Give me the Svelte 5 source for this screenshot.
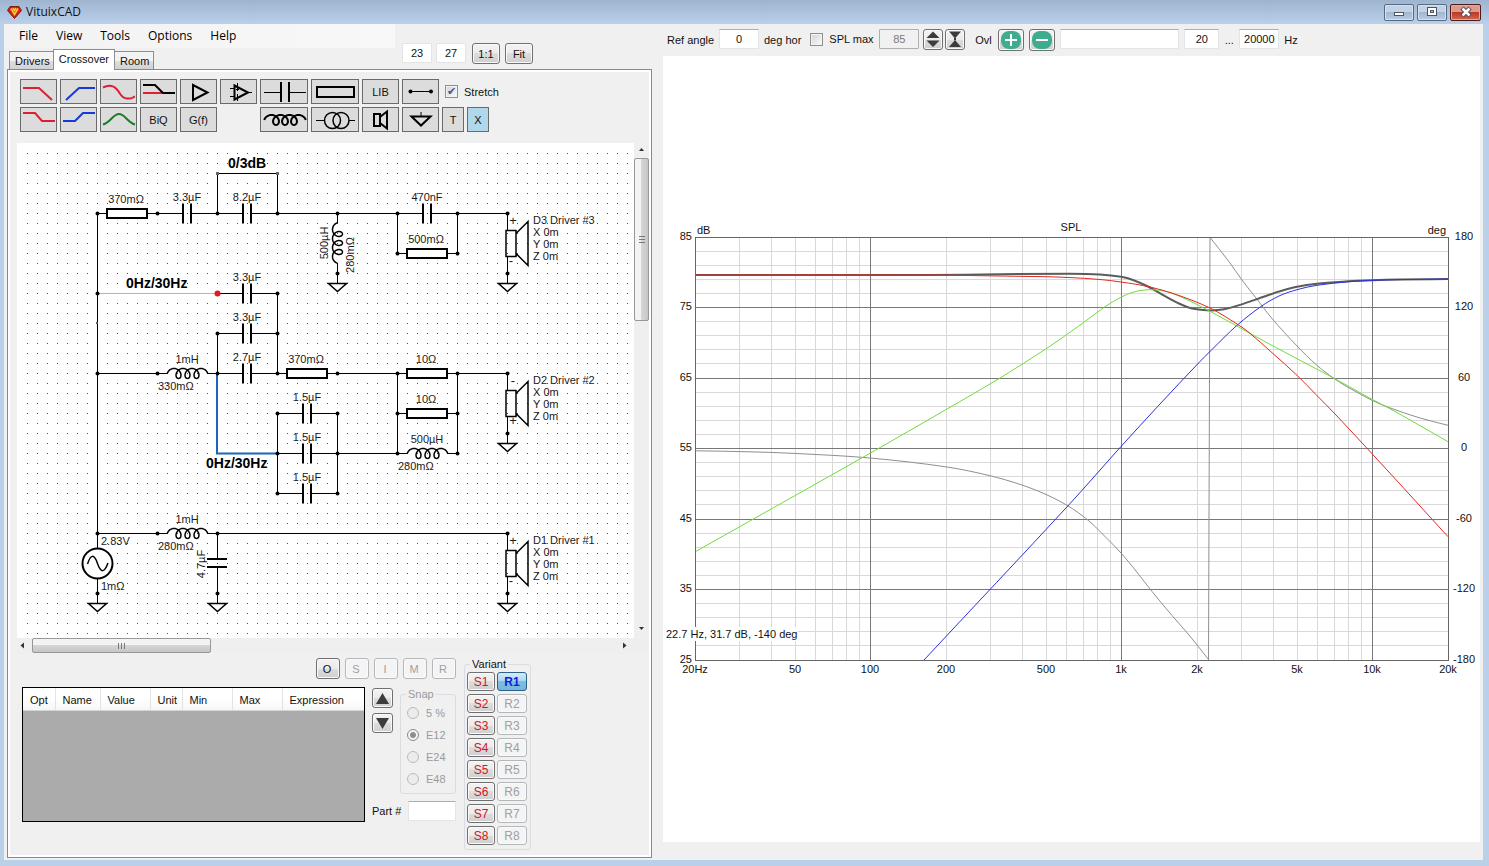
<script>
  const menus = ['File', 'View', 'Tools', 'Options', 'Help'];
  const tabs = ['Drivers', 'Crossover', 'Room'];
  const columns = [
    { name: 'Opt', w: 32 },
    { name: 'Name', w: 45 },
    { name: 'Value', w: 50 },
    { name: 'Unit', w: 32 },
    { name: 'Min', w: 50 },
    { name: 'Max', w: 50 },
    { name: 'Expression', w: 82 }
  ];
  const snaps = ['5 %', 'E12', 'E24', 'E48'];
  const slots = [1, 2, 3, 4, 5, 6, 7, 8];
  const editTools = ['O', 'S', 'I', 'M', 'R'];

  // Coil outline: a trochoid whose loops hang below the wire.
  function coil(loops, pitch, ax, ay) {
    const end = Math.PI * (loops + 0.5);
    const pts = [];
    for (let t = -end; t <= end + 0.001; t += Math.PI / 16) {
      const x = (pitch * t) / (2 * Math.PI) - ax * Math.sin(t);
      const y = ay * Math.cos(t);
      pts.push(`${x.toFixed(2)} ${y.toFixed(2)}`);
    }
    return 'M' + pts.join('L');
  }
  const coilPath = coil(3, 9, 4.5, 5);
  const toolCoil = coil(3, 9, 5, 5);

  // Schematic, in canvas units
  const wires = [
    'M97.5 533.5V213.5H107', 'M147 213.5H183', 'M191 213.5H243', 'M251 213.5H423', 'M431 213.5H507.5',
    'M217.5 213.5V173.5H277.5V213.5', 'M397.5 213.5V253.5H407', 'M447 253.5H457.5V213.5',
    'M217.5 293.5H243', 'M251 293.5H277.5V373.5', 'M243 333.5H217.5V373.5', 'M251 333.5H277.5',
    'M97.5 373.5H167', 'M207 373.5H243', 'M251 373.5H287', 'M327 373.5H407', 'M447 373.5H507.5',
    'M303 413.5H277.5V493.5H303', 'M311 413.5H337.5V493.5H311', 'M277.5 453.5H303', 'M311 453.5H407',
    'M397.5 373.5V453.5', 'M457.5 373.5V453.5', 'M397.5 413.5H407', 'M447 413.5H457.5', 'M447 453.5H457.5',
    'M97.5 533.5H167', 'M207 533.5H507.5', 'M217.5 533.5V559', 'M217.5 567V603.5',
    'M97.5 533.5V548', 'M97.5 579V603.5', 'M337.5 213.5V223', 'M337.5 263V283.5'
  ];
  const nodes = [
    [97.5, 213.5], [157.5, 213.5], [217.5, 213.5], [277.5, 213.5], [337.5, 213.5], [397.5, 213.5], [457.5, 213.5], [507.5, 213.5],
    [397.5, 253.5], [457.5, 253.5], [337.5, 273.5], [507.5, 273.5], [97.5, 293.5], [277.5, 293.5], [217.5, 333.5], [277.5, 333.5],
    [97.5, 373.5], [157.5, 373.5], [217.5, 373.5], [277.5, 373.5], [337.5, 373.5], [397.5, 373.5], [457.5, 373.5], [507.5, 373.5],
    [277.5, 413.5], [337.5, 413.5], [397.5, 413.5], [457.5, 413.5], [277.5, 453.5], [337.5, 453.5], [397.5, 453.5], [457.5, 453.5],
    [277.5, 493.5], [337.5, 493.5], [507.5, 433.5], [97.5, 533.5], [157.5, 533.5], [217.5, 533.5], [507.5, 533.5],
    [97.5, 593.5], [217.5, 593.5], [507.5, 593.5]
  ];
  const caps = [
    [187, 213.5, '3.3µF'], [247, 213.5, '8.2µF'], [427, 213.5, '470nF'], [247, 293.5, '3.3µF'], [247, 333.5, '3.3µF'],
    [247, 373.5, '2.7µF'], [307, 413.5, '1.5µF'], [307, 453.5, '1.5µF'], [307, 493.5, '1.5µF']
  ];
  const resistors = [
    [127, 213, '370mΩ'], [427, 253, '500mΩ'], [307, 373, '370mΩ'], [427, 373, '10Ω'], [427, 413, '10Ω']
  ];
  const coils = [
    [187, 373.5, '1mH', '330mΩ'], [427, 453.5, '500µH', '280mΩ'], [187, 533.5, '1mH', '280mΩ']
  ];
  const grounds = [[337.5, 283.5], [507.5, 283.5], [507.5, 443.5], [97.5, 603.5], [217.5, 603.5], [507.5, 603.5]];
  const drivers = [
    { y: 213.5, name: 'D3 Driver #3', top: '+', bottom: '-' },
    { y: 373.5, name: 'D2 Driver #2', top: '-', bottom: '+' },
    { y: 533.5, name: 'D1 Driver #1', top: '+', bottom: '-' }
  ];

  // Response chart
  const left = 695.5, right = 1448.5, top = 237.5, bottom = 660.5;
  const fx = (f) => Math.round(left + 251 * Math.log10(f / 20) - 0.5) + 0.5;
  const dy = (db) => Math.floor(237 + (85 - db) * 7.05) + 0.5;
  const minorF = [];
  for (const d of [10, 100, 1000, 10000]) for (let k = 2; k < 10; k++) {
    const f = d * k;
    if (f > 20 && f < 20000) minorF.push(f);
  }
  const minorDb = [];
  for (let d = 27; d < 85; d += 2) if (d % 10 !== 5) minorDb.push(d);
  const majorDb = [75, 65, 55, 45, 35];
  const majorF = [100, 1000, 10000];
  const dbLabels = [85, 75, 65, 55, 45, 35, 25];
  const freqLabels = [[20, '20Hz'], [50, '50'], [100, '100'], [200, '200'], [500, '500'], [1000, '1k'], [2000, '2k'], [5000, '5k'], [10000, '10k'], [20000, '20k']];

  function smooth(p) {
    let d = `M${p[0][0]} ${p[0][1]}`;
    for (let i = 0; i < p.length - 1; i++) {
      const a = p[Math.max(0, i - 1)], b = p[i], c = p[i + 1], e = p[Math.min(p.length - 1, i + 2)];
      const h = c[0] - b[0];
      const m1 = (c[1] - a[1]) / (c[0] - a[0]);
      const m2 = (e[1] - b[1]) / (e[0] - b[0]);
      d += `C${(b[0] + h / 3).toFixed(1)} ${(b[1] + (m1 * h) / 3).toFixed(1)} ${(c[0] - h / 3).toFixed(1)} ${(c[1] - (m2 * h) / 3).toFixed(1)} ${c[0]} ${c[1]}`;
    }
    return d;
  }
  const total = smooth([[696, 275], [930, 275], [1000, 274.2], [1069, 273.7], [1100, 274.4], [1121, 276.7], [1133, 280], [1149, 287], [1165, 296.2], [1179, 303.5], [1192, 308.5], [1210, 310.4], [1224, 309.3], [1240, 304.9], [1262, 297.3], [1280, 291.3], [1297, 286.8], [1317, 283.7], [1348, 281.3], [1372, 280.2], [1400, 279.6], [1448, 279]]);
  const red = smooth([[696, 275], [930, 275], [1000, 276], [1045, 276.7], [1069, 277.5], [1100, 279.5], [1121, 282], [1150, 287], [1179, 295.5], [1211, 308.5], [1237, 324], [1249, 332.5], [1272, 352.7], [1297, 375.3], [1316, 394.6], [1336, 415], [1372, 453.7], [1399, 483], [1448, 536.7]]);
  const blue = smooth([[924, 660], [1069, 504.7], [1121, 446.5], [1160, 404], [1197.6, 364], [1211, 350.5], [1237, 325.3], [1261, 306.5], [1279, 296], [1297, 289.7], [1317, 285.3], [1348, 281.8], [1372, 280.4], [1400, 279.6], [1448, 279]]);
  const green = smooth([[696, 551.3], [870, 453.3], [947, 409], [1000, 378], [1045, 349.5], [1069, 333], [1089, 318.5], [1106, 306], [1121, 297.2], [1132, 292.5], [1142, 290.3], [1152, 289.7], [1166, 291.4], [1176, 294.7], [1192, 302], [1211, 311.8], [1236, 325.5], [1272, 345.5], [1297, 358.7], [1336, 379.3], [1372, 399.3], [1396, 412], [1448, 441.7]]);
  const phaseLow = smooth([[696, 450.8], [750, 451.8], [794, 453.4], [870, 458], [947, 467], [990, 475.7], [1021, 484.7], [1045, 494], [1069, 506.5], [1089, 521], [1102, 533.5], [1121, 553], [1136, 571], [1152, 591.5], [1172, 615.5], [1189, 635], [1208.5, 659.5]]);
  const phaseHigh = smooth([[1210.5, 238], [1229, 261.7], [1242, 280], [1256, 298], [1272, 318.5], [1297, 346], [1316, 364.5], [1334, 378.5], [1352, 389.5], [1372, 400.3], [1389, 407.5], [1419, 417.7], [1448, 425.3]]);

  let stretch = $state(true);
  let splMax = $state(false);
</script>

<div class="window">
  <header class="title">
    <svg width="15" height="13" viewBox="0 0 15 13" aria-hidden="true">
      <path d="M3 .5H12L14.5 4.5L7.5 12.5L.5 4.5Z" fill="#c81e18" stroke="#7d1f14" />
      <path d="M3.5 2H6L7.500 4L9 2H11.500L12.500 4.500L7.500 10.500L2.500 4.500Z" fill="#e02a1c" />
      <path d="M4 2.500L7.500 8.500L11 2.500M6 2L7.500 4.500L9 2" fill="none" stroke="#f6cf3a" stroke-width="1.500" />
    </svg>
    <h1>VituixCAD</h1>
    <div class="win-buttons">
      <button aria-label="Minimize"><svg width="12" height="12"><rect x="1.5" y="6.5" width="9" height="3" fill="#fff" stroke="#4b5563" /></svg></button>
      <button aria-label="Maximize"><svg width="12" height="12"><rect x="1.5" y="1.5" width="9" height="8" fill="#fff" stroke="#4b5563" /><rect x="4.5" y="4.5" width="3" height="2" fill="#a9bed6" stroke="#4b5563" /></svg></button>
      <button class="close" aria-label="Close"><svg width="14" height="12"><path d="M3 2L11 10M11 2L3 10" stroke="#53424a" stroke-width="4.5" /><path d="M3.500 2.500L10.500 9.500M10.500 2.500L3.500 9.500" stroke="#fff" stroke-width="2.500" /></svg></button>
    </div>
  </header>

  <main>
    <section class="left">
      <div class="head">
        <div class="head-left">
          <nav class="menu">
            {#each menus as m}<button>{m}</button>{/each}
          </nav>
          <div class="tabs" role="tablist">
            {#each tabs as t}<button role="tab" aria-selected={t === 'Crossover'} class:active={t === 'Crossover'}>{t}</button>{/each}
          </div>
        </div>
        <div class="zoom">
          <input class="num" aria-label="Columns" value="23" />
          <input class="num" aria-label="Rows" value="27" />
          <button class="btn">1:1</button>
          <button class="btn">Fit</button>
        </div>
      </div>

      <div class="page">
        <div class="tools">
          <button class="tool" aria-label="Low pass"><svg viewBox="0 0 35 23"><path d="M2 8H18L31 20" stroke="#dd2030" stroke-width="2" /></svg></button>
          <button class="tool" aria-label="High pass"><svg viewBox="0 0 35 23"><path d="M5 20L18 8H34" stroke="#1838d8" stroke-width="2" /></svg></button>
          <button class="tool" aria-label="Shelving"><svg viewBox="0 0 35 23"><path d="M2 7.500C7 5 12 5 16 9.500S20 18 26 18.500S31 17.500 34 16.500" stroke="#dd2030" stroke-width="2" /></svg></button>
          <button class="tool" aria-label="Allpass"><svg viewBox="0 0 35 23"><path d="M2 13H21" stroke="#e02030" stroke-width="2" /><path d="M2 5H14L22 13H34" stroke="#000" stroke-width="2" /></svg></button>
          <button class="tool" aria-label="Buffer"><svg viewBox="0 0 35 23"><path d="M12 5V20L26.500 12.500Z" stroke="#000" stroke-width="2" /></svg></button>
          <button class="tool" aria-label="Opamp"><svg viewBox="0 0 35 23"><path d="M13.500 5.500V19.500L27 12.500Z" stroke="#000" stroke-width="2" /><path d="M9 8.500H13M9 16.500H13M27 12.500H31M15 9.500H18M16.500 3V11M16.500 14V21" stroke="#000" /></svg></button>
          <button class="tool" aria-label="Capacitor"><svg viewBox="0 0 46 23"><path d="M3 12.500H20M28 12.500H45" stroke="#000" /><path d="M20 2V22M28 2V22" stroke="#000" stroke-width="2" /></svg></button>
          <button class="tool" aria-label="Resistor"><svg viewBox="0 0 46 23"><rect x="5" y="7" width="37" height="10" stroke="#000" stroke-width="2" /></svg></button>
          <button class="tool">LIB</button>
          <button class="tool" aria-label="Wire"><svg viewBox="0 0 35 23"><path d="M7 11.500H28" stroke="#000" /><circle cx="7.500" cy="11.500" r="2" fill="#000" /><circle cx="28" cy="11.500" r="2" fill="#000" /></svg></button>
          <label class="check stretch"><input type="checkbox" bind:checked={stretch} />Stretch</label>
          <button class="tool" aria-label="Shelf cut"><svg viewBox="0 0 35 23"><path d="M2 5H14L21 13H34" stroke="#dd2030" stroke-width="2" /></svg></button>
          <button class="tool" aria-label="Shelf boost"><svg viewBox="0 0 35 23"><path d="M2 13H14L22 5H34" stroke="#1838d8" stroke-width="2" /></svg></button>
          <button class="tool" aria-label="Peak"><svg viewBox="0 0 35 23"><path d="M2 16.500C10 14 12 6 18 6S26 14 34 16.500" stroke="#1d7c2a" stroke-width="2" /></svg></button>
          <button class="tool">BiQ</button>
          <button class="tool">G(f)</button>
          <button class="tool col7" aria-label="Inductor"><svg viewBox="0 0 46 23"><path d={toolCoil} transform="translate(24 12)" stroke="#000" stroke-width="2" /></svg></button>
          <button class="tool" aria-label="Transformer"><svg viewBox="0 0 46 23"><path d="M4 12.500H12M37 12.500H43" stroke="#000" /><circle cx="20.500" cy="12.500" r="8" stroke="#000" stroke-width="1.500" /><circle cx="29" cy="12.500" r="8" stroke="#000" stroke-width="1.500" /></svg></button>
          <button class="tool" aria-label="Driver"><svg viewBox="0 0 35 23"><path d="M11 6H17V18H11ZM17 9L24 3.500V20.500L17 15" stroke="#000" stroke-width="2" /></svg></button>
          <button class="tool" aria-label="Ground"><svg viewBox="0 0 35 23"><path d="M18 4V8" stroke="#000" /><path d="M8.500 8.500H27.500L18 17.500Z" stroke="#000" stroke-width="2" /></svg></button>
          <button class="tool">T</button>
          <button class="tool on">X</button>
        </div>

        <div class="canvas">
          <svg class="schematic" viewBox="17 143 617 495">
            <defs>
              <pattern id="grid" x="27" y="153" width="10" height="10" patternUnits="userSpaceOnUse">
                <rect width="1" height="1" fill="#4a4a4a" />
              </pattern>
            </defs>
            <rect x="17" y="143" width="617" height="495" fill="#fff" />
            <rect x="27" y="153" width="602" height="482" fill="url(#grid)" />
            <g fill="none" stroke="#000">
              <path d={wires.join('')} />
              <path d="M97.5 293.500H217.500" stroke="#b4b4b4" />
              {#each caps as c}
                <path d="M{c[0] - 4} {c[1] - 10}v20M{c[0] + 4} {c[1] - 10}v20" stroke-width="2" />
              {/each}
              <path d="M207 559H227M207 567H227" stroke-width="2" />
              {#each resistors as r}
                <rect x={r[0] - 20} y={r[1] - 4} width="40" height="9" stroke-width="2" fill="#fff" />
              {/each}
              {#each coils as c}
                <path d={coilPath} transform="translate({c[0] + 0.5} {c[1]})" stroke-width="1.500" />
              {/each}
              <path d={coilPath} transform="translate(337.5 243) rotate(-90)" stroke-width="1.500" />
              {#each grounds as g}
                <path d="M{g[0] - 9} {g[1]}h18l-9 8z" stroke-width="1.500" fill="#fff" />
              {/each}
              {#each drivers as d}
                <path d="M507.5 {d.y}v17M507.500 {d.y + 43}v27" />
                <path d="M506 {d.y + 17}h10v26h-10zM516 {d.y + 20}l12 -12v44l-12 -12" stroke-width="1.500" />
              {/each}
              <circle cx="97.500" cy="563.500" r="15" stroke-width="2" fill="#fff" />
              <path d="M87.500 564Q92.500 549 97.500 563.500T108 563" stroke-width="1.500" />
              <path d="M217 373.5V453.5H277.500" stroke="#1a66b8" stroke-width="2" />
            </g>
            {#each nodes as n}<circle cx={n[0]} cy={n[1]} r="2" />{/each}
            <rect x="96" y="322" width="2" height="2" fill="#555" />
            <rect x="216" y="172" width="3" height="3" fill="#666" />
            <rect x="276" y="172" width="3" height="3" fill="#666" />
            <circle cx="217.500" cy="293.500" r="3" fill="#e01b24" />
            <g class="vals">
              {#each caps as c}<text x={c[0]} y={c[1] - 12.5} text-anchor="middle">{c[2]}</text>{/each}
              {#each resistors as r}<text x={r[0] - 1} y={r[1] - 10} text-anchor="middle">{r[2]}</text>{/each}
              {#each coils as c}
                <text x={c[0]} y={c[1] - 10.5} text-anchor="middle">{c[2]}</text>
                <text x={c[0] - 29} y={c[1] + 16.5}>{c[3]}</text>
              {/each}
              <text transform="translate(328 243) rotate(-90)" text-anchor="middle">500µH</text>
              <text transform="translate(354 255) rotate(-90)" text-anchor="middle">280mΩ</text>
              <text transform="translate(205 564) rotate(-90)" text-anchor="middle">4.7µF</text>
              <text x="101" y="545">2.83V</text>
              <text x="101" y="590">1mΩ</text>
              {#each drivers as d}
                <text x="513" y={d.y + 11.5} text-anchor="middle" class="sign">{d.top}</text>
                <text x={d.bottom === '+' ? 513 : 511} y={d.y + 51.5} text-anchor="middle" class="sign">{d.bottom}</text>
                <text x="533" y={d.y + 10.5}>{d.name}</text>
                <text x="533" y={d.y + 22.5}>X 0m</text>
                <text x="533" y={d.y + 34.5}>Y 0m</text>
                <text x="533" y={d.y + 46.5}>Z 0m</text>
              {/each}
            </g>
            <g class="notes">
              <text x="228" y="168">0/3dB</text>
              <text x="126" y="288">0Hz/30Hz</text>
              <text x="206" y="468">0Hz/30Hz</text>
            </g>
          </svg>
          <div class="vbar">
            <svg width="15" height="15"><path d="M5 8H10L7.500 5Z" fill="#333" /></svg>
            <div class="thumb"><svg width="8" height="9"><path d="M1 1.500H7M1 4.500H7M1 7.500H7" stroke="#777" /></svg></div>
            <svg class="end" width="15" height="15"><path d="M5 4H10L7.500 7Z" fill="#333" /></svg>
          </div>
          <div class="hbar">
            <svg width="15" height="15"><path d="M7 4.500V10.500L3.500 7.500Z" fill="#333" /></svg>
            <div class="thumb"><svg width="9" height="8"><path d="M1.500 1V7M4.500 1V7M7.500 1V7" stroke="#777" /></svg></div>
            <svg class="end" width="15" height="15"><path d="M4 4.500V10.500L7.500 7.500Z" fill="#333" /></svg>
          </div>
        </div>

        <div class="bottom">
          <div class="edit">
            <div class="edit-tools">
              {#each editTools as e, i}<button class="btn" disabled={i > 0}>{e}</button>{/each}
            </div>
            <div class="edit-row">
              <div class="sheet">
                <table>
                  <colgroup>{#each columns as c}<col style:width="{c.w}px" />{/each}</colgroup>
                  <thead><tr>{#each columns as c}<th scope="col">{c.name}</th>{/each}</tr></thead>
                </table>
              </div>
              <div class="side">
                <div class="side-top">
                  <div class="updown">
                    <button class="btn" aria-label="Up"><svg width="15" height="13"><path d="M1 12H14L7.500 1Z" fill="#3c3c3c" /></svg></button>
                    <button class="btn" aria-label="Down"><svg width="15" height="13"><path d="M1 1H14L7.500 12Z" fill="#3c3c3c" /></svg></button>
                  </div>
                  <fieldset class="snap" disabled>
                    <legend>Snap</legend>
                    {#each snaps as s}
                      <label><input type="radio" name="snap" value={s} checked={s === 'E12'} />{s}</label>
                    {/each}
                  </fieldset>
                </div>
                <div class="part">
                  <label for="part">Part #</label>
                  <input id="part" />
                </div>
              </div>
            </div>
          </div>
          <fieldset class="variant">
            <legend>Variant</legend>
            {#each slots as n}
              <button class="btn save">S{n}</button>
              <button class="btn recall" class:current={n === 1} disabled={n > 1}>R{n}</button>
            {/each}
          </fieldset>
        </div>
      </div>
    </section>

    <section class="right">
      <div class="bar">
        <label class="lbl" for="ref">Ref angle</label>
        <input id="ref" class="w40" value="0" />
        <span class="unit">deg hor</span>
        <label class="check spl"><input type="checkbox" bind:checked={splMax} />SPL max</label>
        <input class="w40" aria-label="SPL max value" value="85" disabled />
        <div class="pair">
          <button class="btn" aria-label="Shift"><svg width="16" height="18"><path d="M1.500 8H14.500L8 1.500ZM1.500 10.500H14.500L8 17Z" fill="#3c3c3c" /></svg></button>
          <button class="btn" aria-label="Compress"><svg width="16" height="18"><path d="M2 1.500H14L8 8.500ZM2 17H14L8 10ZM7 8H9V11H7Z" fill="#3c3c3c" /></svg></button>
        </div>
        <span class="ovl">Ovl</span>
        <button class="btn ov" aria-label="Add overlay"><svg width="22" height="20"><rect x="1" y="1" width="20" height="18" rx="8" fill="#3fab8f" /><path d="M5 10H17M11 4V16" stroke="#fff" stroke-width="2" /></svg></button>
        <button class="btn ov" aria-label="Remove overlay"><svg width="22" height="20"><rect x="1" y="1" width="20" height="18" rx="8" fill="#3fab8f" /><path d="M5 10H17" stroke="#fff" stroke-width="2" /></svg></button>
        <input class="name" aria-label="Overlay name" />
        <input class="w35" aria-label="Frequency minimum" value="20" />
        <span class="dots">...</span>
        <input class="w40" aria-label="Frequency maximum" value="20000" />
        <span class="unit">Hz</span>
      </div>
      <div class="chart">
        <svg viewBox="663 56 817 786" role="img" aria-label="SPL">
          <g stroke="#d9d9d9">
            {#each minorDb as d}<path d="M{left} {dy(d)}H{right}" />{/each}
            {#each minorF as f}<path d="M{fx(f)} {top}V{bottom}" />{/each}
          </g>
          <g stroke="#787878" fill="none">
            {#each majorDb as d}<path d="M{left} {dy(d)}H{right}" />{/each}
            {#each majorF as f}<path d="M{fx(f)} {top}V{bottom}" />{/each}
            <rect x={left} y={top} width={right - left} height={bottom - top} stroke="#666" />
          </g>
          <g fill="none">
            <path d={phaseLow} stroke="#8f8f8f" />
            <path d="M1208.500 660L1210 238" stroke="#8f8f8f" />
            <path d={phaseHigh} stroke="#8f8f8f" />
            <path d={total} stroke="#5c5c5c" stroke-width="2" />
            <path d={green} stroke="#72dc3c" />
            <path d={red} stroke="#e02a22" />
            <path d={blue} stroke="#2c34dc" />
          </g>
          <rect x="664" y="627" width="134" height="14" fill="#fff" />
          <g class="ticks">
            {#each dbLabels as d, i}
              <text x="692" y={dy(d) + 2.5} text-anchor="end">{d}</text>
              <text x="1464" y={dy(d) + 2.5} text-anchor="middle">{180 - i * 60}</text>
            {/each}
            {#each freqLabels as f}<text x={fx(f[0]) - 0.5} y="673" text-anchor="middle">{f[1]}</text>{/each}
            <text x="697" y="234">dB</text>
            <text x="1071" y="231" text-anchor="middle">SPL</text>
            <text x="1446" y="234" text-anchor="end">deg</text>
            <text x="666" y="638">22.7 Hz, 31.7 dB, -140 deg</text>
          </g>
        </svg>
      </div>
    </section>
  </main>
</div>

<style>
  :global(body) { margin: 0; }
  :global(*) { box-sizing: border-box; }
  .window {
    min-height: 100vh;
    display: flex;
    flex-direction: column;
    padding: 0 6px 6px 4px;
    background: #bad0e9;
    font: 11px/14px "Liberation Sans", Arial, sans-serif;
    color: #111;
  }
  button, input { font: inherit; color: inherit; margin: 0; padding: 0; }
  svg { display: block; }
  .title {
    height: 24px;
    margin: 0 -6px 0 -4px;
    padding: 0 2px 0 7px;
    display: flex;
    align-items: center;
    gap: 4px;
    background: linear-gradient(#9fb5cf, #bad0ea);
  }
  h1 { margin: 0; font: 12px/16px "Open Sans", "Noto Sans", sans-serif; }
  .win-buttons { display: flex; gap: 3px; margin-left: auto; padding-right: 6px; }
  .win-buttons button {
    width: 30px; height: 17px;
    display: flex; align-items: center; justify-content: center;
    border: 1px solid #566a84; border-radius: 2px;
    background: linear-gradient(#c3d3e5 50%, #a0b7d1 50%, #b9cde3);
    box-shadow: inset 0 0 0 1px #d5e1ee;
  }
  .win-buttons .close { width: 31px; border-color: #4f1a1a; background: linear-gradient(#dc9a8c 50%, #bb3a28 50%, #cf6a50); box-shadow: inset 0 0 0 1px #e3a99c; }
  main { flex: 1; display: flex; background: #f0f0f0; }
  .left { flex: 0 1 651px; min-width: 0; display: flex; flex-direction: column; padding: 0 3px 2px; }
  .head { display: flex; height: 45px; gap: 7px; margin-left: -3px; }
  .head-left { width: 391px; display: flex; flex-direction: column; justify-content: space-between; }
  .menu { height: 24px; padding-left: 9px; display: flex; background: linear-gradient(90deg, #f2f2f2, #f8f8f8); }
  .menu button { border: 0; background: none; padding: 0 6px; margin-right: 6px; font: 12px/24px "Open Sans", "Noto Sans", sans-serif; color: #000; }
  .tabs { display: flex; align-items: flex-end; padding-left: 5px; }
  .tabs button { height: 18px; padding: 0 4px 0 5px; border: 1px solid #8c8e94; border-bottom: 0; background: linear-gradient(#f3f3f3 50%, #dfdfdf 50%, #d2d2d2); }
  .tabs button + button { border-left: 0; }
  .tabs .active { height: 21px; margin-bottom: -1px; padding: 0 5px 2px; background: #fff; border-left: 1px solid #8c8e94; margin-left: -2px; z-index: 1; }
  .zoom { display: flex; padding-top: 19px; align-items: flex-start; }
  input:not([type]) { height: 20px; min-width: 0; border: 1px solid #e1e4e8; border-top-color: #abadb3; background: #fff; text-align: center; border-radius: 1px; }
  input:not([type]):disabled { background: #f1f1f1; border-color: #afafaf; color: #7a7a7a; }
  .zoom .num { width: 30px; margin-right: 4px; border-color: #e3e3e3; }
  .btn {
    border: 1px solid #707070; border-radius: 3px;
    background: linear-gradient(#f3f3f3, #ebebeb 50%, #dddddd 50%, #cfcfcf);
    box-shadow: inset 0 0 0 1px #fafafa;
    display: flex; align-items: center; justify-content: center;
    flex: none;
  }
  .btn:disabled { border-color: #b4b8bb; background: #f4f4f4; color: #a0a0a0; }
  .zoom .btn { width: 28px; height: 21px; margin-left: 2px; margin-right: 3px; }
  .page {
    flex: 1;
    border: 1px solid #868a90;
    box-shadow: inset 0 0 0 2px #fff;
    padding: 9px 2px 0 9px;
  }
  .tools {
    display: grid;
    grid-template-columns: repeat(6, 37px) 48px 48px 37px 37px 22px 22px;
    grid-auto-rows: 25px;
    gap: 3px;
    margin: 0 60px 11px 3px;
  }
  .tool { border: 1px solid #6a6a6a; background: #dcdcdc; display: flex; align-items: center; justify-content: center; }
  .tool svg { width: 100%; height: 100%; fill: none; }
  .tool.on { background: #b1d7ea; }
  .col7 { grid-column: 7; }
  .check { display: flex; align-items: center; gap: 6px; white-space: nowrap; }
  .check input {
    appearance: none; flex: none;
    width: 13px; height: 13px;
    border: 1px solid #8e8f8f;
    background: linear-gradient(135deg, #cfd3d8, #fafafa);
    box-shadow: inset 0 0 0 1px #f4f4f4;
  }
  .check input:checked::after { content: "✔"; display: block; font: 11px/11px "DejaVu Sans", sans-serif; text-align: center; color: #3f5796; }
  .stretch { grid-column: 11 / -1; padding-left: 3px; width: 60px; }
  .canvas { display: grid; grid-template-columns: minmax(0, 1fr) 15px; background: #eee; }
  .schematic { width: 100%; height: auto; }
  .vals { font: 11px "Liberation Sans", Arial, sans-serif; fill: #1a1a1a; }
  .sign { font-size: 13px; }
  .notes { font: bold 14px "Liberation Sans", Arial, sans-serif; }
  .vbar, .hbar { display: flex; background: #efefef; }
  .vbar { flex-direction: column; }
  .hbar { height: 15px; }
  .end { margin: auto 0 0 auto; }
  .thumb { display: flex; align-items: center; justify-content: center; border: 1px solid #979797; border-radius: 2px; }
  .vbar .thumb { height: 33%; background: linear-gradient(90deg, #f3f3f3 45%, #d6d6d6 50%, #c6c6c6); }
  .hbar .thumb { width: 29%; background: linear-gradient(#f3f3f3 45%, #d6d6d6 50%, #c6c6c6); }
  .bottom { display: flex; align-items: flex-start; padding: 4px 0 6px 5px; }
  .edit { flex: 0 1 434px; display: flex; flex-direction: column; gap: 8px; padding-top: 1px; }
  .edit-tools { display: flex; justify-content: flex-end; gap: 5px; }
  .edit-tools .btn { width: 24px; height: 21px; padding-right: 2px; }
  .edit-row { display: flex; gap: 7px; align-items: flex-start; }
  .sheet { flex: 1; min-width: 0; height: 135px; border: 1px solid #000; background: #ababab; overflow: hidden; }
  table { width: 100%; table-layout: fixed; border-collapse: collapse; background: #fff; }
  th { height: 22px; padding: 2px 0 0 7px; font-weight: normal; text-align: left; border-right: 1px solid #e2e3e6; border-bottom: 1px solid #d5d5d5; background: linear-gradient(#fff 50%, #f5f6f7); }
  th:last-child { border-right: 0; }
  .side { flex: 0 0 84px; display: flex; flex-direction: column; gap: 7px; }
  .side-top { display: flex; gap: 7px; }
  .updown { display: flex; flex-direction: column; gap: 5px; padding-top: 1px; }
  .updown .btn { width: 21px; height: 20px; }
  fieldset { margin: 0; border: 1px solid #d9dce0; border-radius: 3px; min-width: 0; }
  legend { padding: 0 2px; margin-left: 3px; }
  .snap { flex: 1; padding: 1px 0 3px 6px; color: #9a9a9a; }
  .snap legend { margin-left: -1px; }
  .snap label { display: flex; align-items: center; gap: 7px; height: 22px; white-space: nowrap; }
  .snap input { appearance: none; flex: none; width: 12px; height: 12px; border: 1px solid #bcbcbc; border-radius: 50%; background: #ececec; }
  .snap input:checked { border-color: #8a8a8a; background: radial-gradient(circle, #8e8e8e 35%, #f4f4f4 50%); }
  .part { display: flex; align-items: center; justify-content: space-between; }
  .part input { width: 48px; }
  .variant { display: grid; grid-template-columns: 28px 30px; gap: 3px 2px; margin-left: 8px; padding: 1px 3px 4px 2px; }
  .variant .btn { height: 19px; font-size: 12px; }
  .save { color: #d8141c; }
  .variant .current { color: #0a1edc; font-weight: bold; border-color: #2c628b; background: linear-gradient(#d5ebf8, #a9d5ee 50%, #80bde0 50%, #76b4dc); box-shadow: none; }
  .right { flex: 1; min-width: 0; display: flex; flex-direction: column; padding: 0 3px 18px 8px; }
  .bar { height: 32px; display: flex; align-items: center; gap: 5px; padding-left: 4px; white-space: nowrap; }
  .bar > * { flex: none; }
  .bar > input, .bar > .check { margin-bottom: 2px; }
  .lbl { width: 47px; }
  .unit { min-width: 36px; }
  .spl { margin-left: 4px; width: 64px; }
  .bar .w40 { width: 40px; }
  .bar .w35 { width: 35px; }
  .bar .name { width: 119px; }
  .pair { display: flex; gap: 2px; margin: 0 0 2px -1px; }
  .pair .btn { width: 20px; height: 21px; }
  .ovl { width: 18px; margin-left: 5px; }
  .ov { width: 26px; height: 22px; }
  .dots { width: 10px; text-align: center; }
  .chart { flex: 1; background: #fff; }
  .chart svg { width: 100%; height: auto; }
  .ticks { font: 11px "Liberation Sans", Arial, sans-serif; fill: #111; }
</style>
